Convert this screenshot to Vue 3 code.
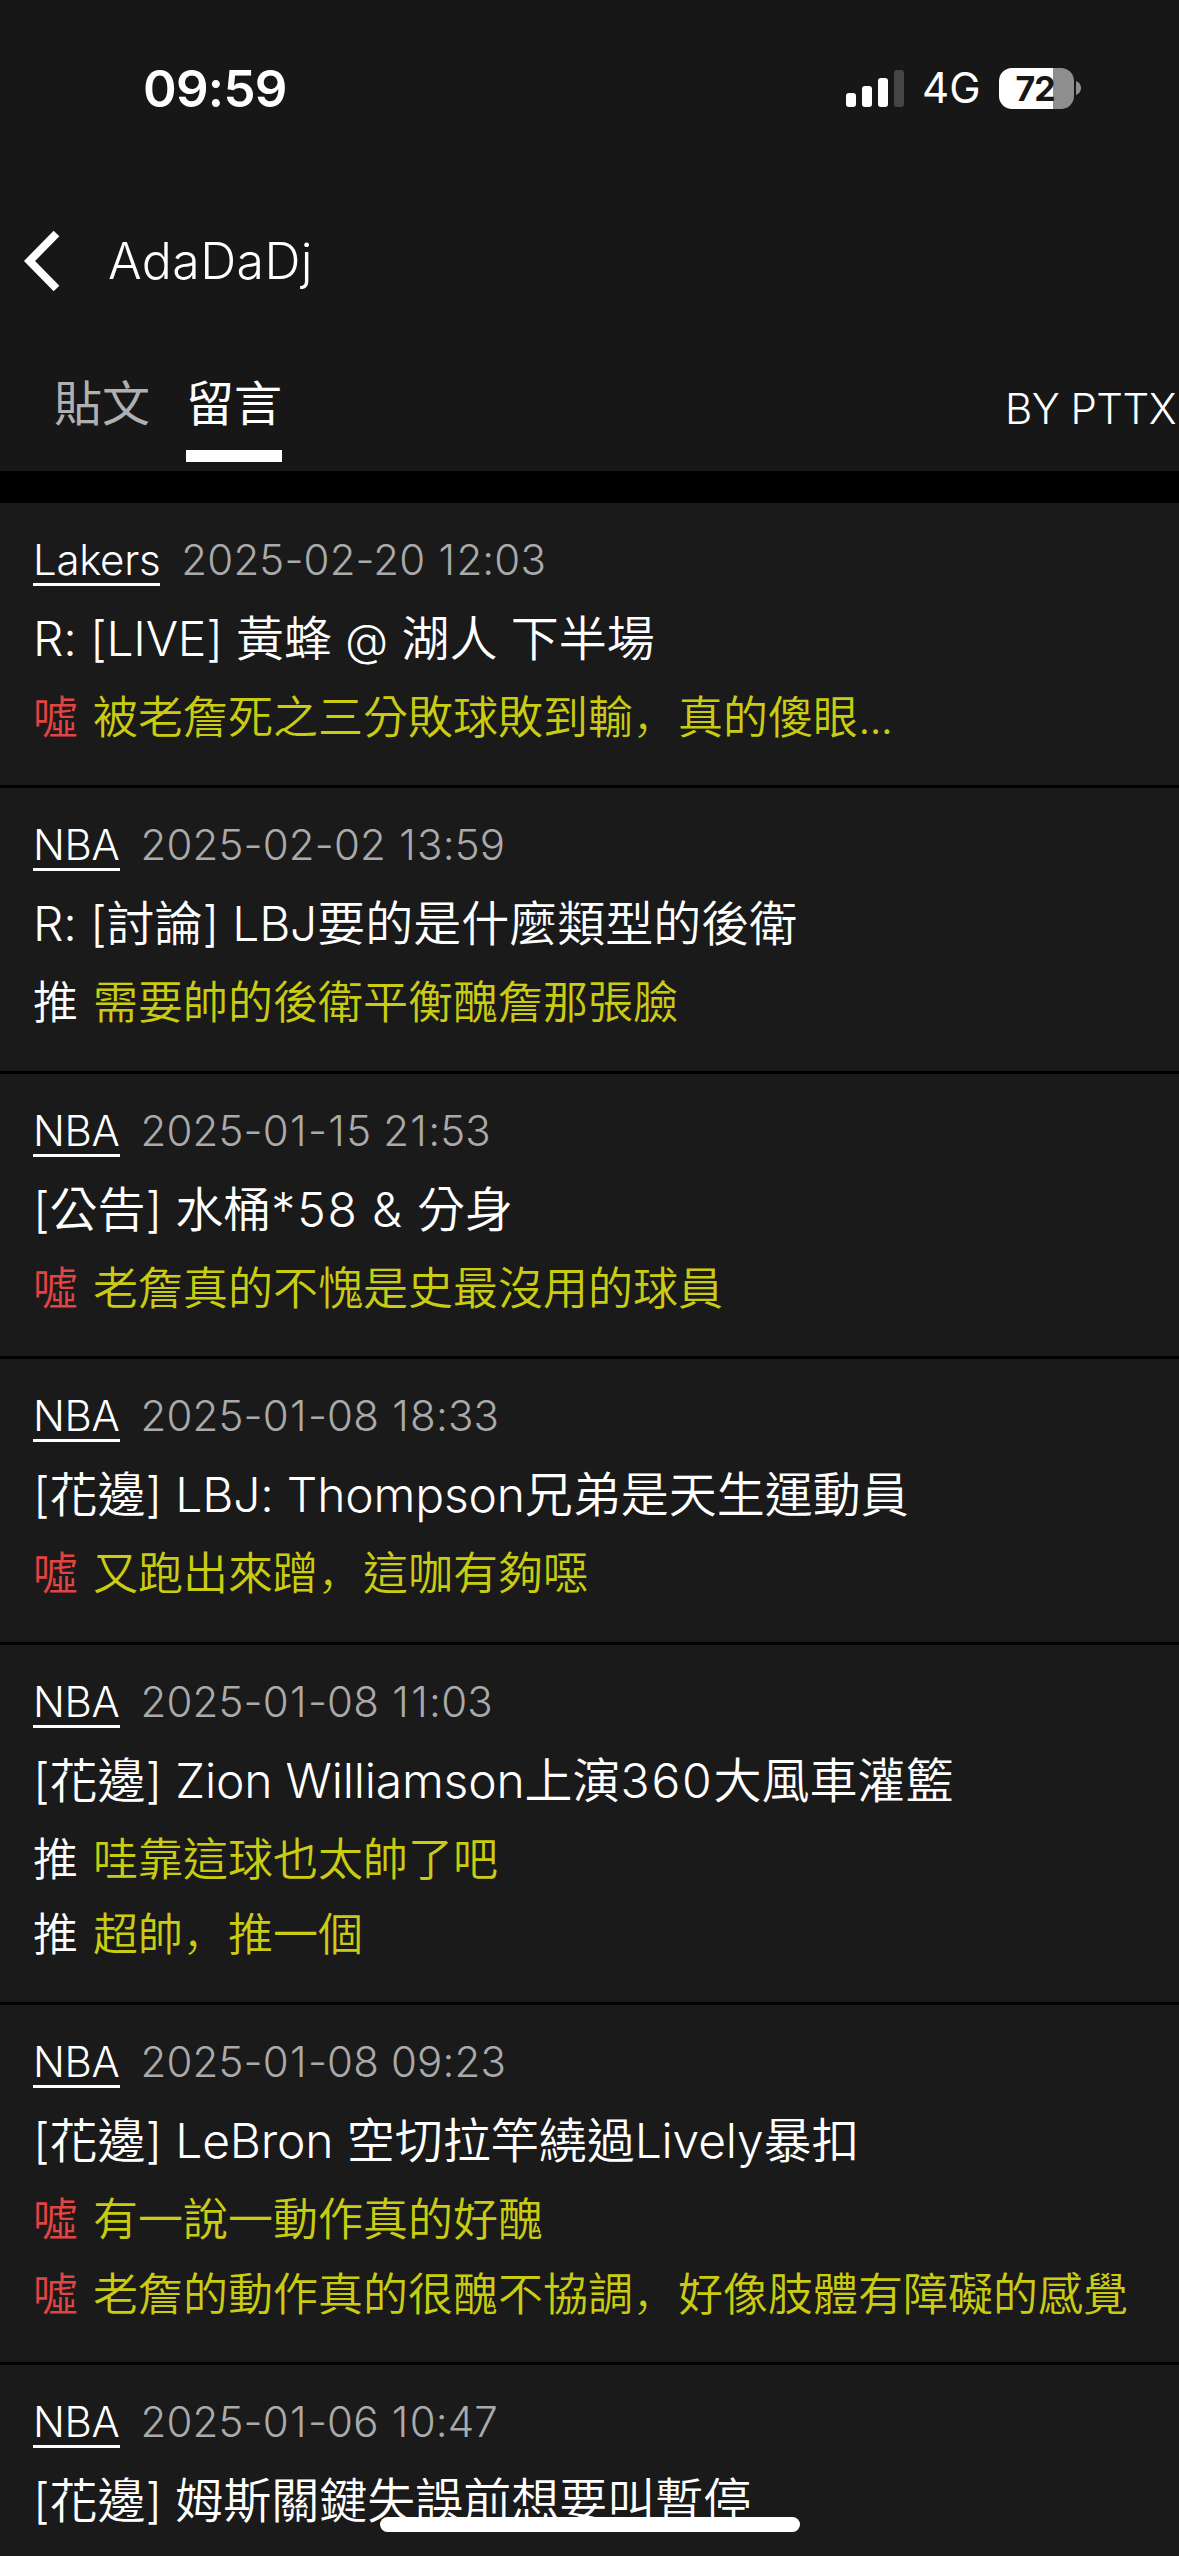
<script setup>
const items = [
  { board: 'Lakers', time: '2025-02-20 12:03', title: 'R: [LIVE] 黃蜂 @ 湖人 下半場', comments: [{ tag: '噓', text: '被老詹死之三分敗球敗到輸，真的傻眼...' }] },
  { board: 'NBA', time: '2025-02-02 13:59', title: 'R: [討論] LBJ要的是什麼類型的後衛', comments: [{ tag: '推', text: '需要帥的後衛平衡醜詹那張臉' }] },
  { board: 'NBA', time: '2025-01-15 21:53', title: '[公告] 水桶*58 & 分身', comments: [{ tag: '噓', text: '老詹真的不愧是史最沒用的球員' }] },
  { board: 'NBA', time: '2025-01-08 18:33', title: '[花邊] LBJ: Thompson兄弟是天生運動員', comments: [{ tag: '噓', text: '又跑出來蹭，這咖有夠噁' }] },
  { board: 'NBA', time: '2025-01-08 11:03', title: '[花邊] Zion Williamson上演360大風車灌籃', comments: [{ tag: '推', text: '哇靠這球也太帥了吧' }, { tag: '推', text: '超帥，推一個' }] },
  { board: 'NBA', time: '2025-01-08 09:23', title: '[花邊] LeBron 空切拉竿繞過Lively暴扣', comments: [{ tag: '噓', text: '有一說一動作真的好醜' }, { tag: '噓', text: '老詹的動作真的很醜不協調，好像肢體有障礙的感覺' }] },
  { board: 'NBA', time: '2025-01-06 10:47', title: '[花邊] 姆斯關鍵失誤前想要叫暫停', comments: [] },
]

// Splits a string into script runs so each one gets its own weight and tracking.
const kinds = [
  [/^[0-9*&]/, 'num'],
  [/^@/, 'at'],
  [/^\./, 'dots'],
  [/^，/, 'comma'],
  [/^[\x20-\x7e]/, 'latin'],
]
function runs(text) {
  const out = []
  for (const ch of text) {
    const hit = kinds.find(([re]) => re.test(ch))
    const kind = hit ? hit[1] : 'cjk'
    const last = out[out.length - 1]
    if (last && last.kind === kind) last.text += ch
    else out.push({ kind, text: ch })
  }
  return out
}
</script>

<template>
  <div class="screen">
    <header class="header">
      <div class="status">
        <span class="clock">09:59</span>
        <div class="indicators">
          <svg class="signal" width="58" height="37" viewBox="0 0 58 37">
            <rect x="0" y="23" width="10" height="14" rx="3" fill="#fff" />
            <rect x="16" y="16" width="10" height="21" rx="3" fill="#fff" />
            <rect x="32" y="8" width="10" height="29" rx="3" fill="#fff" />
            <rect x="48" y="0" width="10" height="37" rx="3" fill="#454545" />
          </svg>
          <span class="network">4G</span>
          <div class="battery"><span>72</span></div>
          <svg class="nub" width="5" height="14" viewBox="0 0 5 14"><path d="M0 0Q5 2 5 7T0 14Z" fill="#8e8e8e" /></svg>
        </div>
      </div>
      <div class="titlebar">
        <svg class="back" width="38" height="62" viewBox="0 0 38 62"><path d="M32.500 3.500L5.500 31L32.500 58.500" fill="none" stroke="#fff" stroke-width="8" /></svg>
        <span class="name">AdaDaDj</span>
      </div>
      <nav class="tabs">
        <span class="tab">貼文</span>
        <span class="tab active">留言</span>
        <span class="by">BY PTTX</span>
      </nav>
    </header>
    <main class="list">
      <article v-for="(item, i) in items" :key="i" class="item">
        <div class="meta">
          <span class="board">{{ item.board }}</span>
          <span class="time"><span v-for="(d, k) in item.time" :key="k" :class="{ one: d === '1' }">{{ d }}</span></span>
        </div>
        <div class="title"><span v-for="(r, k) in runs(item.title)" :key="k" :class="r.kind">{{ r.text }}</span></div>
        <div v-for="(c, j) in item.comments" :key="j" class="comment">
          <span class="tag" :class="{ boo: c.tag === '噓' }">{{ c.tag }}</span>
          <span class="text"><span v-for="(r, k) in runs(c.text)" :key="k" :class="r.kind">{{ r.text }}</span></span>
        </div>
      </article>
    </main>
    <div class="home"></div>
  </div>
</template>

<style>
body {
  background: #1a1a1a;
}
</style>

<style scoped>
.screen {
  position: relative;
  width: 1179px;
  height: 2556px;
  overflow: hidden;
  background: #000;
  color: #fff;
  font-family: Inter, "Noto Sans CJK TC", sans-serif;
  font-weight: 300;
  white-space: pre;
}
.header {
  box-sizing: border-box;
  height: 471px;
  background: #171717;
}
.status {
  display: flex;
  justify-content: space-between;
  height: 176px;
  padding: 0 98px 0 143px;
}
.clock {
  font-size: 51px;
  font-weight: 600;
  line-height: 177px;
  letter-spacing: -0.7px;
}
.indicators {
  display: flex;
  align-items: center;
}
.signal {
  margin-right: 18px;
}
.network {
  width: 77px;
  font-size: 42px;
  font-weight: 400;
  line-height: 178px;
}
.battery {
  width: 75px;
  height: 41px;
  border-radius: 13px;
  background: linear-gradient(90deg, #fff 54px, #8e8e8e 54px);
  color: #171717;
  font-size: 34px;
  font-weight: 700;
  line-height: 41px;
  text-align: center;
  letter-spacing: -1px;
  text-indent: -3px;
}
.nub {
  margin-left: 2px;
}
.titlebar {
  display: flex;
  align-items: center;
  height: 170px;
}
.back {
  margin-left: 24px;
}
.name {
  margin-left: 46px;
  font-size: 50px;
  letter-spacing: 0.4px;
}
.tabs {
  display: flex;
  height: 116px;
  padding-left: 54px;
}
.tab {
  width: 96px;
  margin-right: 36px;
  box-sizing: border-box;
  font-size: 48px;
  line-height: 115px;
  font-weight: 400;
  color: #b0b0b0;
}
.active {
  color: #fff;
  border-bottom: 12px solid #fff;
}
.by {
  margin-left: auto;
  margin-right: 3px;
  font-size: 42px;
  line-height: 125px;
  letter-spacing: -0.5px;
}
.list {
  margin-top: 32px;
}
.item {
  padding: 24px 33px 30.4px;
  border-bottom: 3px solid #000;
  background: #1a1a1a;
}
.meta {
  display: flex;
  align-items: flex-start;
  height: 66px;
  font-size: 42px;
  line-height: 66px;
}
.board {
  height: 56px;
  border-bottom: 3px solid #fff;
  letter-spacing: -0.3px;
}
.time {
  margin-left: 21px;
  color: #aaa;
  letter-spacing: 0.15px;
}
.one {
  padding: 0 1.2px;
}
.title {
  height: 87px;
  font-size: 48px;
  line-height: 91px;
}
.latin {
  letter-spacing: -0.2px;
}
.num {
  letter-spacing: 1.8px;
}
.at {
  font-size: 44px;
  line-height: 1;
}
.cjk,
.tag {
  font-weight: 350;
}
.comment {
  display: flex;
  height: 75px;
  font-size: 45px;
  line-height: 75px;
}
.tag {
  margin-right: 15px;
}
.boo {
  color: #e24343;
}
.text {
  color: #c9cc12;
}
.dots {
  letter-spacing: -1.5px;
}
.comma {
  font-family: "Noto Sans CJK SC", sans-serif;
  line-height: 1;
}
.home {
  position: absolute;
  left: 380px;
  top: 2517px;
  width: 420px;
  height: 15px;
  border-radius: 8px;
  background: #fff;
}
</style>
